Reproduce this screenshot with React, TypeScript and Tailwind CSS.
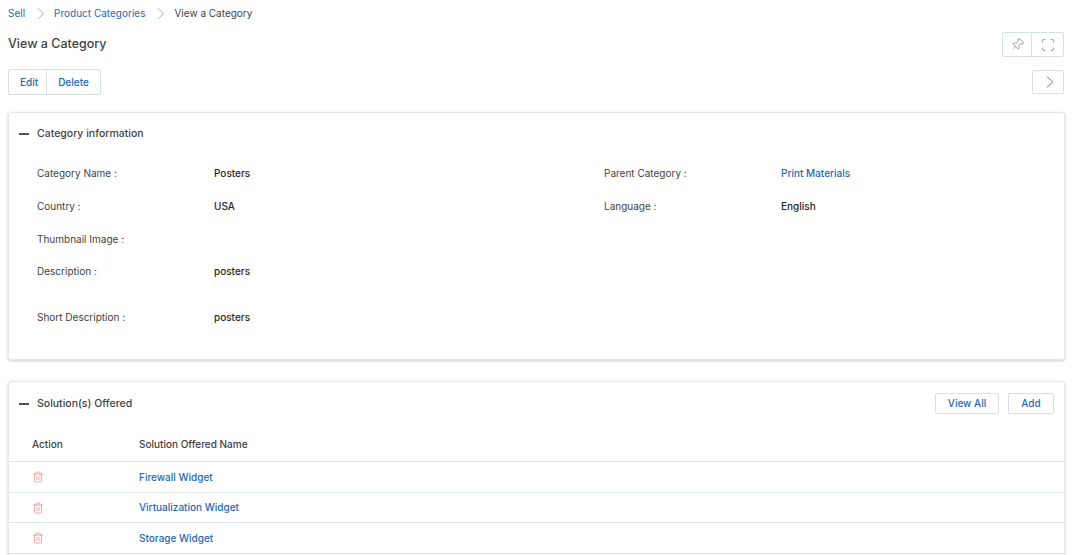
import React from 'react';
import { Pin, Trash2 } from 'lucide-react';

function Chevron({ className }: { className?: string }) {
  return (
    <svg viewBox="0 0 10 16" className={className} fill="none" stroke="currentColor" strokeWidth="1">
      <path d="M1.5 1.5 L8.5 8 L1.5 14.5" />
    </svg>
  );
}

function Minus() {
  return <span className="w-[10px] h-[2px] bg-[#52525b] shrink-0" />;
}

function Expand() {
  return (
    <svg viewBox="0 0 12 12" className="w-3 h-3 text-[#9ca3af]" fill="none" stroke="currentColor" strokeWidth="1">
      <path d="M.5 3.5V2A1.5 1.5 0 0 1 2 .5h1.5M8.5.5H10A1.5 1.5 0 0 1 11.5 2v1.5M11.5 8.5V10A1.5 1.5 0 0 1 10 11.5H8.5M3.5 11.5H2A1.5 1.5 0 0 1 .5 10V8.5" />
    </svg>
  );
}

function Field({ label, value, link, className }: { label: string; value?: string; link?: boolean; className?: string }) {
  return (
    <div className={`flex items-center h-[33px] ${className ?? ''}`}>
      <span className="w-[177px] text-[#3f3f46]">{label}</span>
      {value && <span className={`font-medium ${link ? 'text-[#1f69b3]' : 'text-[#27272a]'}`}>{value}</span>}
    </div>
  );
}

const solutions = ['Firewall Widget', 'Virtualization Widget', 'Storage Widget'];

export default function App() {
  return (
    <div className="h-[555px] overflow-hidden bg-white pl-2 pr-[7px] text-[10px] font-['Inter',sans-serif] text-[#27272a]">
      <nav className="flex items-center h-[26px] text-[#1f69b3]">
        <span>Sell</span>
        <Chevron className="w-[8px] h-[13px] ml-[12px] mr-[9px] text-[#9ca3af]" />
        <span>Product Categories</span>
        <Chevron className="w-[8px] h-[13px] ml-[12px] mr-[9px] text-[#9ca3af]" />
        <span className="text-[#3f3f46]">View a Category</span>
      </nav>

      <div className="flex items-start justify-between h-[26px] mt-[5px]">
        <h1 className="text-[12.5px] leading-[26px] font-medium text-[#3f3f46]">View a Category</h1>
        <div className="flex h-[25px] mt-[1px] border border-[#d9dfe8] rounded-[2px] mr-px">
          <button className="w-[29px] flex items-center justify-center border-r border-[#d9dfe8]">
            <Pin className="w-[13px] h-[13px] text-[#7b8088] rotate-45" strokeWidth={1.5} />
          </button>
          <button className="w-[31px] flex items-center justify-center">
            <Expand />
          </button>
        </div>
      </div>

      <div className="flex items-center justify-between mt-[12px] h-[26px]">
        <div className="flex h-full border border-[#d9dfe8] rounded-[2px] text-[#1f69b3] font-medium">
          <button className="w-[38px] pl-[3px] border-r border-[#d9dfe8]">Edit</button>
          <button className="w-[53px]">Delete</button>
        </div>
        <button className="w-[32px] h-[24px] flex items-center justify-center border border-[#d9dfe8] rounded-[2px] mr-px">
          <Chevron className="w-[8px] h-[14px] ml-[4px] text-[#4b5563]" />
        </button>
      </div>

      <section className="mt-[17px] h-[248px] w-[1057px] border border-[#e5e7eb] rounded-[3px] shadow-[0_1px_3px_rgba(0,0,0,0.2)]">
        <div className="flex items-center gap-2 px-[10px] h-[41px] font-medium text-[#3f3f46]">
          <Minus />
          <span className="text-[10.5px]">Category information</span>
        </div>
        <div className="px-[28px] pt-[3px]">
          <div className="grid grid-cols-[567px_1fr]">
            <Field label="Category Name :" value="Posters" />
            <Field label="Parent Category :" value="Print Materials" link />
            <Field label="Country :" value="USA" />
            <Field label="Language :" value="English" />
          </div>
          <Field label="Thumbnail Image :" />
          <Field label="Description :" value="posters" className="-mt-px" />
          <Field label="Short Description :" value="posters" className="mt-[13px]" />
        </div>
      </section>

      <section className="mt-[21px] h-[300px] w-[1057px] border border-[#e5e7eb] rounded-[3px] shadow-[0_1px_3px_rgba(0,0,0,0.2)]">
        <div className="flex items-center justify-between pl-[10px] pr-[10px] h-[43px]">
          <div className="flex items-center gap-2 font-medium text-[#3f3f46]">
            <Minus />
            <span className="text-[10.5px]">Solution(s) Offered</span>
          </div>
          <div className="flex gap-[9px] text-[#1f69b3] font-medium">
            <button className="w-[64px] h-[21px] border border-[#d9dfe8] rounded-[2px]">View All</button>
            <button className="w-[46px] h-[21px] border border-[#d9dfe8] rounded-[2px]">Add</button>
          </div>
        </div>
        <div className="flex items-center h-[37px] pl-[23px] pt-[2px] border-b border-[#dde3ec] font-medium text-[#3f3f46]">
          <span className="w-[107px]">Action</span>
          <span>Solution Offered Name</span>
        </div>
        {solutions.map((name) => (
          <div key={name} className="flex items-center h-[30.6px] pl-[23px] pt-px border-b border-[#dde3ec]">
            <span className="w-[107px]">
              <Trash2 className="w-3 h-3 text-[#ef8a8a]" strokeWidth={1.5} />
            </span>
            <span className="font-medium text-[#1f69b3]">{name}</span>
          </div>
        ))}
      </section>
    </div>
  );
}
